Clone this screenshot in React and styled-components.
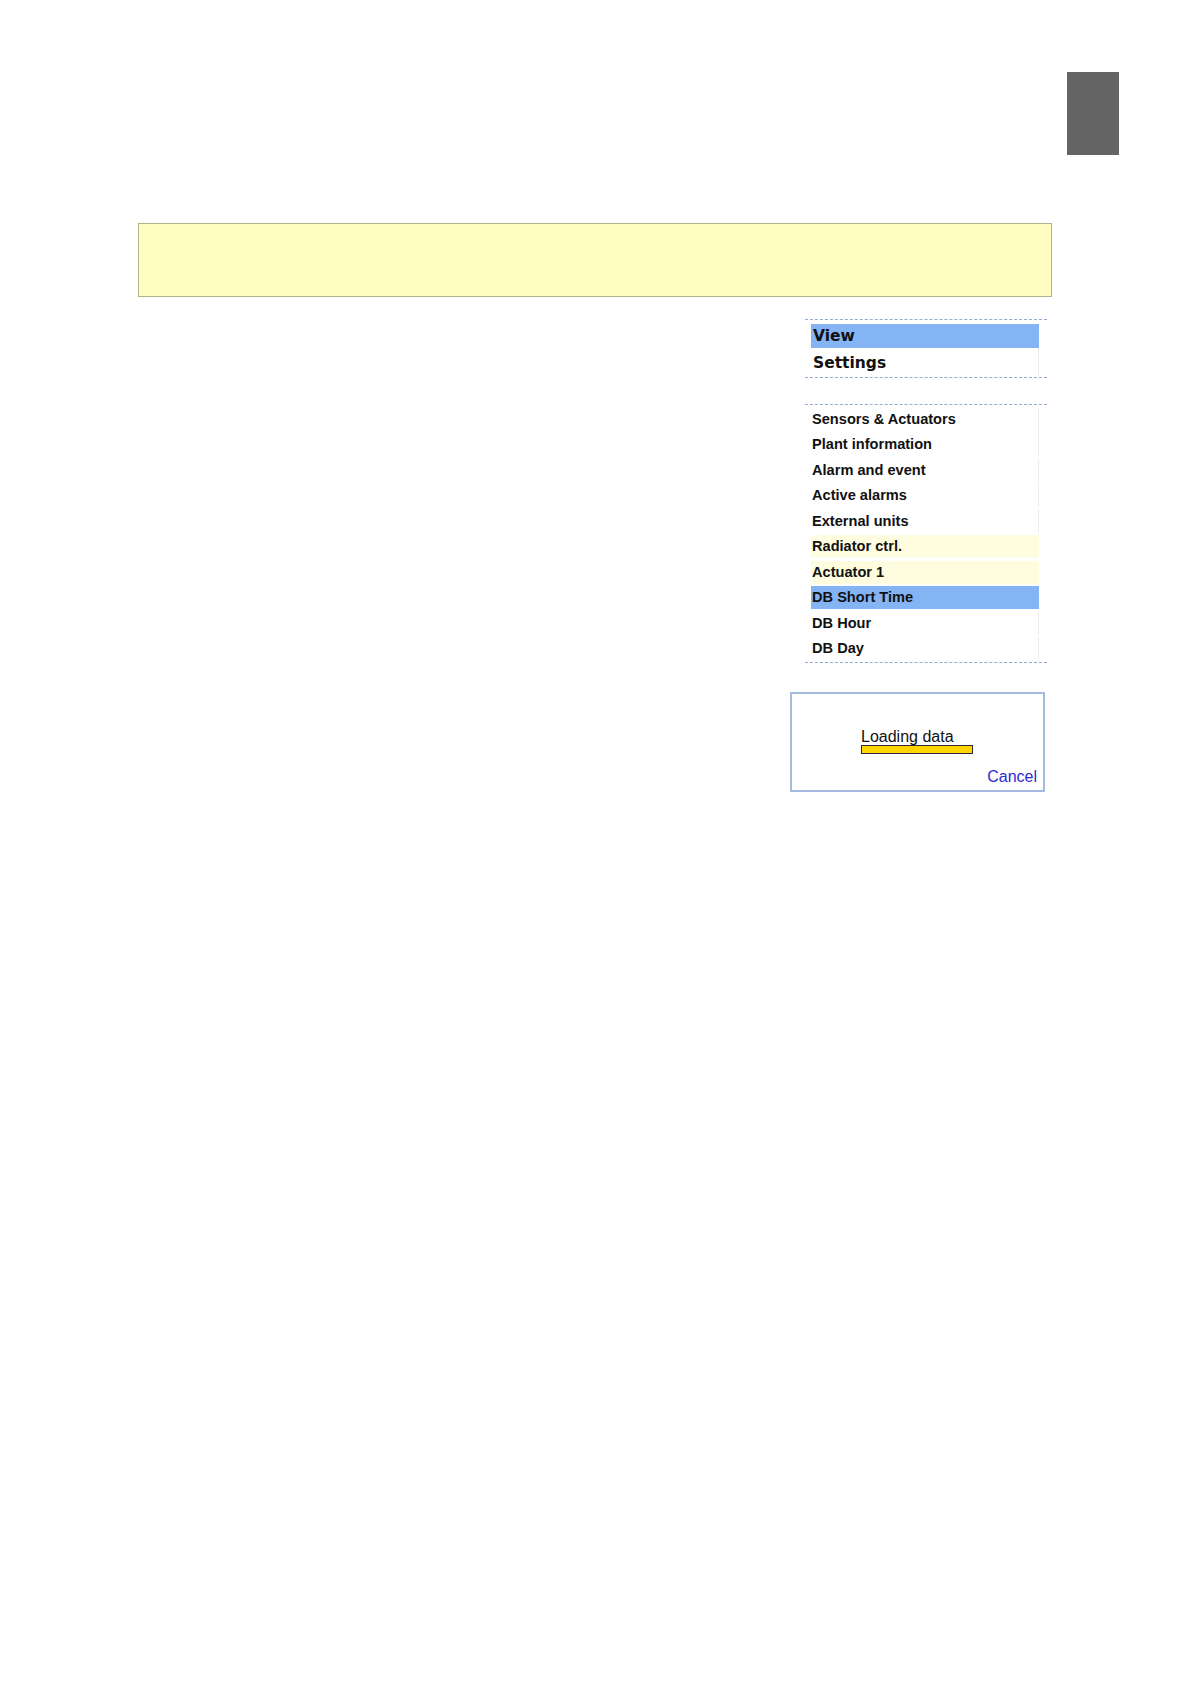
import React from 'react';
import styled, { createGlobalStyle } from 'styled-components';

const GlobalStyle = createGlobalStyle`
  html, body {
    margin: 0;
    padding: 0;
    background: #ffffff;
  }
  body {
    font-family: "Liberation Sans", Arial, sans-serif;
    color: #111;
  }
`;

const Page = styled.div`
  width: 1191px;
  min-height: 1684px;
`;

const Header = styled.div`
  display: flex;
  justify-content: flex-end;
  padding: 72px 72px 0 0;
  height: 155px;
  box-sizing: border-box;
`;

const Tab = styled.div`
  width: 52px;
  height: 83px;
  background: #646464;
`;

const Notice = styled.div`
  margin: 68px 0 0 138px;
  width: 914px;
  height: 74px;
  box-sizing: border-box;
  background: #fffdc0;
  border: 1px solid #b3b08a;
`;

const Side = styled.div`
  margin: 22px 0 0 790px;
  width: 257px;
  display: flex;
  flex-direction: column;
`;

const Group = styled.div`
  margin-left: 15px;
  border-top: 1px dashed #94abcc;
  border-bottom: 1px dashed #94abcc;
  padding: ${p => (p.$big ? '4px 8px 1px 6px' : '2.5px 8px 1.5px 6px')};
  display: flex;
  flex-direction: column;
  gap: ${p => (p.$big ? '0' : '2.5px')};
  & + & {
    margin-top: 26px;
  }
`;

const bgFor = s => (s === 'active' ? '#84b4f4' : s === 'warm' ? '#fffde0' : '#ffffff');

const MainItem = styled.div`
  height: ${p => (p.$state === 'active' ? '24px' : '28px')};
  line-height: ${p => (p.$state === 'active' ? '24px' : '30px')};
  padding-left: 2px;
  font-family: "DejaVu Sans", Verdana, sans-serif;
  font-weight: bold;
  font-size: 15.5px;
  color: #111;
  background: ${p => bgFor(p.$state)};
  border-right: 1px solid ${p => (p.$state === 'active' ? '#84b4f4' : '#ececec')};
`;

const SubItem = styled.div`
  height: 23px;
  line-height: 23px;
  padding-left: 1px;
  font-family: "Liberation Sans", Arial, sans-serif;
  font-weight: bold;
  font-size: 14.6px;
  color: #111;
  background: ${p => bgFor(p.$state)};
  border-right: 1px solid ${p => (p.$state === 'active' ? '#84b4f4' : p.$state === 'warm' ? '#fffde0' : '#ececec')};
`;

const LoadBox = styled.div`
  margin-top: 29px;
  width: 255px;
  height: 100px;
  box-sizing: border-box;
  border: 2px solid #a4badf;
  padding: 34px 6px 0 69px;
  display: flex;
  flex-direction: column;
`;

const LoadLabel = styled.div`
  font-size: 16px;
  line-height: 18px;
  color: #111;
`;

const Bar = styled.div`
  width: 112px;
  height: 9px;
  box-sizing: border-box;
  margin-top: -1px;
  background: #ffd500;
  border: 1px solid #2e2448;
`;

const Cancel = styled.a`
  align-self: flex-end;
  margin-top: 14px;
  font-size: 16px;
  line-height: 18px;
  color: #2a2ad0;
  cursor: pointer;
`;

const mainItems = [
  { label: 'View', state: 'active' },
  { label: 'Settings' },
];

const subItems = [
  { label: 'Sensors & Actuators' },
  { label: 'Plant information' },
  { label: 'Alarm and event' },
  { label: 'Active alarms' },
  { label: 'External units' },
  { label: 'Radiator ctrl.', state: 'warm' },
  { label: 'Actuator 1', state: 'warm' },
  { label: 'DB Short Time', state: 'active' },
  { label: 'DB Hour' },
  { label: 'DB Day' },
];

export default function App() {
  return (
    <Page>
      <GlobalStyle />
      <Header>
        <Tab />
      </Header>
      <Notice />
      <Side>
        <Group $big>
          {mainItems.map(it => (
            <MainItem key={it.label} $state={it.state}>{it.label}</MainItem>
          ))}
        </Group>
        <Group>
          {subItems.map(it => (
            <SubItem key={it.label} $state={it.state}>{it.label}</SubItem>
          ))}
        </Group>
        <LoadBox>
          <LoadLabel>Loading data</LoadLabel>
          <Bar />
          <Cancel>Cancel</Cancel>
        </LoadBox>
      </Side>
    </Page>
  );
}
